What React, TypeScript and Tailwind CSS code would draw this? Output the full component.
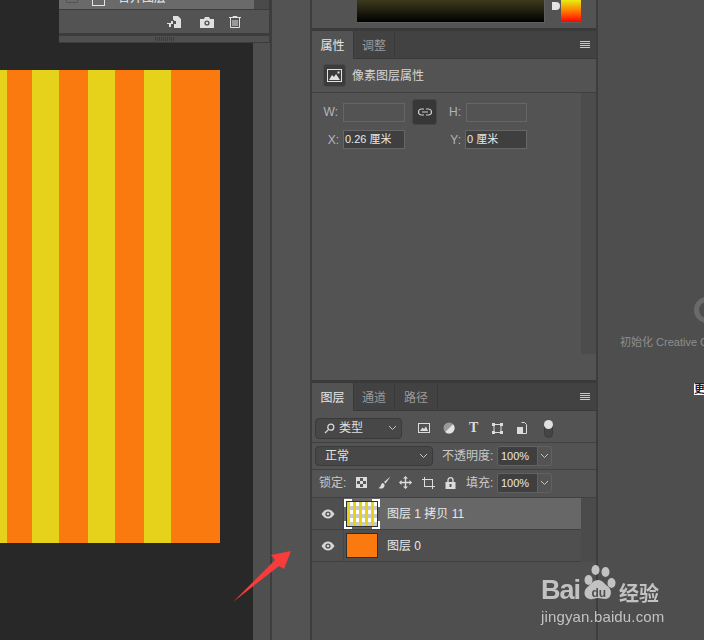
const font = { fontFamily: '"Liberation Sans", "Noto Sans CJK SC", sans-serif' }

const Chevron = () => (
  <svg width="9" height="6" viewBox="0 0 9 6" fill="none" stroke="#c4c4c4" strokeWidth="1">
    <path d="M1 1l3.5 3.5L8 1" />
  </svg>
)

const Menu = () => (
  <div className="flex flex-col gap-[1px] w-[10px]">
    <div className="h-[1px] bg-[#c8c8c8]" />
    <div className="h-[1px] bg-[#c8c8c8]" />
    <div className="h-[1px] bg-[#c8c8c8]" />
    <div className="h-[1px] bg-[#c8c8c8]" />
  </div>
)

const Eye = () => (
  <svg width="14" height="10" viewBox="0 0 14 10">
    <path d="M0.5 5C2.5 1.8 4.5 0.5 7 0.5S11.5 1.8 13.5 5C11.5 8.2 9.5 9.5 7 9.5S2.5 8.2 0.5 5z" fill="#d6d6d6" />
    <circle cx="7" cy="5" r="2.6" fill="#4f4f4f" />
    <circle cx="7" cy="5" r="1.3" fill="#d6d6d6" />
  </svg>
)

const Tabs = ({ items }: { items: { label: string; w: string }[] }) => (
  <div className="h-[28px] bg-[#424242] border-b border-[#393939] flex items-center shrink-0">
    {items.map((t, i) => (
      <div
        key={t.label}
        className={`${t.w} flex items-center justify-center pt-[2px] text-xs border-r border-[#393939] ${i === 0 ? 'bg-[#535353] text-[#e6e6e6] h-[28px] -mb-[1px]' : 'h-full text-[#9a9a9a]'}`}
      >
        {t.label}
      </div>
    ))}
    <div className="ml-auto mr-[6px]"><Menu /></div>
  </div>
)

const Stripes = () => (
  <div className="flex w-[220px] h-[473px] mt-[70px] shrink-0">
    <div className="w-[7px] bg-[#e6d21a]" />
    <div className="w-[25px] bg-[#fb7a10]" />
    <div className="w-[27px] bg-[#e6d21a]" />
    <div className="w-[29px] bg-[#fb7a10]" />
    <div className="w-[27px] bg-[#e6d21a]" />
    <div className="w-[29px] bg-[#fb7a10]" />
    <div className="w-[27px] bg-[#e6d21a]" />
    <div className="w-[49px] bg-[#fb7a10]" />
  </div>
)

const Thumb = () => (
  <div className="relative w-[36px] h-[30px] flex items-center justify-center">
    <div className="absolute left-0 top-0 w-[8px] h-[8px] border-l-2 border-t-2 border-white" />
    <div className="absolute right-0 top-0 w-[8px] h-[8px] border-r-2 border-t-2 border-white" />
    <div className="absolute left-0 bottom-0 w-[8px] h-[8px] border-l-2 border-b-2 border-white" />
    <div className="absolute right-0 bottom-0 w-[8px] h-[8px] border-r-2 border-b-2 border-white" />
    <div className="w-[32px] h-[26px] border border-[#2e2e2e] flex overflow-hidden">
      {[0, 1, 2, 3, 4].map(i => (
        <div key={i} className="flex">
          <div className="w-[3px] bg-[#e6d21a]" />
          <div className="w-[3px] bg-[repeating-linear-gradient(180deg,#ffffff_0,#ffffff_4px,#c9c9c9_4px,#c9c9c9_8px)]" />
        </div>
      ))}
    </div>
  </div>
)

const NumberBox = ({ value }: { value: string }) => (
  <div className="flex w-[55px] h-[20px] rounded-[3px] border border-[#616161] overflow-hidden">
    <div className="w-[39px] bg-[#3f3f3f] text-[#e8e8e8] text-[11px] leading-[18px] pl-[3px]">{value}</div>
    <div className="flex-1 border-l border-[#616161] flex items-center justify-center"><Chevron /></div>
  </div>
)

const PropsPanel = () => (
  <div className="bg-[#535353] flex flex-col shrink-0">
    <div className="h-[28px] flex shrink-0">
      <div className="ml-[45px] w-[188px] h-[23px] border-b border-r border-[#5f5f5f] bg-[linear-gradient(180deg,#3e3a1c_0%,#000000_100%)]" />
      <div className="ml-[7px] mt-[2px] w-[8px] h-[8px] rounded-r-full bg-[#e4e4e4]" />
      <div className="ml-[1px] w-[20px] h-[23px] border-b border-[#5f5f5f] bg-[linear-gradient(180deg,#e8ee10_0%,#ff7a00_50%,#ff0000_100%)]" />
    </div>
    <div className="h-[3px] bg-[#3a3a3a] shrink-0" />
    <Tabs items={[{ label: '属性', w: 'w-[42px]' }, { label: '调整', w: 'w-[41px]' }]} />
    <div className="h-[34px] flex items-center pl-[11px] gap-[6px] border-b border-[#3f3f3f] shrink-0">
      <div className="w-[23px] h-[23px] rounded-[3px] bg-[#3c3c3c] border border-[#4a4a4a] flex items-center justify-center">
        <svg width="15" height="13" viewBox="0 0 15 13">
          <rect x="0.5" y="0.5" width="14" height="12" fill="none" stroke="#e2e2e2" />
          <path d="M2 11l3-5 2 2 2-3 4 6z" fill="#e2e2e2" />
          <rect x="10.5" y="2.5" width="2" height="2" fill="#e2e2e2" />
        </svg>
      </div>
      <span className="text-xs text-[#d6d6d6]">像素图层属性</span>
    </div>
    <div className="h-[261px] flex shrink-0">
      <div className="w-[269px] pt-[6px]">
        <div className="flex items-center h-[26px]">
          <span className="w-[31px] text-right pr-[5px] text-xs text-[#aeb6c2]">W:</span>
          <div className="w-[62px] h-[19px] border border-[#666666]" />
          <div className="ml-[7px] w-[25px] h-[26px] rounded-[3px] bg-[#373737] border border-[#464646] flex items-center justify-center">
            <svg width="14" height="8" viewBox="0 0 14 8" fill="none" stroke="#cfcfcf" strokeWidth="1.2">
              <path d="M6 1H3.5a3 3 0 000 6H6M8 1h2.5a3 3 0 010 6H8M4 4h6" />
            </svg>
          </div>
          <span className="w-[29px] text-right pr-[5px] text-xs text-[#aeb6c2]">H:</span>
          <div className="w-[61px] h-[19px] border border-[#666666]" />
        </div>
        <div className="flex items-center h-[19px] mt-[5px]">
          <span className="w-[31px] text-right pr-[4px] text-xs text-[#aeb6c2]">X:</span>
          <div className="w-[62px] h-[19px] border border-[#666666] bg-[#3f3f3f] text-[#e8e8e8] text-[11px] leading-[17px] pl-[1px]">0.26 厘米</div>
          <span className="w-[60px] text-right pr-[4px] text-xs text-[#aeb6c2]">Y:</span>
          <div className="w-[62px] h-[19px] border border-[#666666] bg-[#3f3f3f] text-[#e8e8e8] text-[11px] leading-[17px] pl-[1px]">0 厘米</div>
        </div>
      </div>
      <div className="flex-1 bg-[#4c4c4c]" />
    </div>
    <div className="h-[26px] shrink-0" />
    <div className="h-[3px] bg-[#3a3a3a] shrink-0" />
  </div>
)

const LayersPanel = () => (
  <>
    <Tabs items={[{ label: '图层', w: 'w-[42px]' }, { label: '通道', w: 'w-[41px]' }, { label: '路径', w: 'w-[43px]' }]} />
    <div className="h-[32px] bg-[#535353] flex items-center pl-[3px] pt-[3px] border-b border-[#404040] shrink-0">
      <div className="w-[87px] h-[21px] rounded-[4px] bg-[#474747] border border-[#3a3a3a] flex items-center pl-[8px] pr-[4px] text-xs text-[#e0e0e0]">
        <svg width="11" height="11" viewBox="0 0 11 11" fill="none" stroke="#d8d8d8" strokeWidth="1.3">
          <circle cx="6.8" cy="4.2" r="3" />
          <path d="M4.6 6.4L1 10" />
        </svg>
        <span className="ml-[4px]">类型</span>
        <div className="ml-auto"><Chevron /></div>
      </div>
      <svg className="ml-[16px]" width="12" height="10" viewBox="0 0 12 10">
        <rect x="0.5" y="0.5" width="11" height="9" fill="none" stroke="#dcdcdc" />
        <path d="M2 8l2.5-3.5 1.5 1.5L8 3.5 10 8z" fill="#dcdcdc" />
      </svg>
      <svg className="ml-[13px]" width="12" height="12" viewBox="0 0 12 12">
        <circle cx="6" cy="6" r="5.5" fill="#9a9a9a" />
        <path d="M10 2.2A5.5 5.5 0 012.2 10z" fill="#e2e2e2" />
      </svg>
      <span className="ml-[14px] w-[12px] text-[14px] font-bold leading-none text-[#dcdcdc] font-['Liberation_Serif',serif]">T</span>
      <svg className="ml-[11px]" width="11" height="11" viewBox="0 0 11 11" fill="#dcdcdc">
        <path d="M2 1.5h7v8H2z" fill="none" stroke="#dcdcdc" />
        <rect x="0" y="0" width="3" height="3" />
        <rect x="8" y="0" width="3" height="3" />
        <rect x="0" y="8" width="3" height="3" />
        <rect x="8" y="8" width="3" height="3" />
      </svg>
      <svg className="ml-[14px]" width="10" height="12" viewBox="0 0 10 12">
        <path d="M4.5 0.5h3l2 2v9H5" fill="none" stroke="#dcdcdc" />
        <rect x="0" y="5" width="6" height="7" fill="#dcdcdc" />
      </svg>
      <div className="ml-[17px] mt-[2px] w-[9px] h-[18px] rounded-full border border-[#3b3b3b] bg-[#454545] relative">
        <div className="absolute -left-[1px] -top-[1px] w-[9px] h-[9px] rounded-full bg-[#e0e0e0]" />
      </div>
    </div>
    <div className="h-[27px] bg-[#535353] flex items-center pl-[3px] border-b border-[#404040] shrink-0">
      <div className="w-[118px] h-[20px] rounded-[4px] bg-[#474747] border border-[#3a3a3a] flex items-center pl-[9px] pr-[4px] text-xs text-[#e0e0e0]">
        <span>正常</span>
        <div className="ml-auto"><Chevron /></div>
      </div>
      <span className="ml-[9px] w-[55px] text-xs text-[#c8c8c8] whitespace-nowrap">不透明度:</span>
      <NumberBox value="100%" />
    </div>
    <div className="h-[28px] bg-[#535353] flex items-center pb-[2px] border-b border-[#404040] shrink-0">
      <span className="ml-[7px] w-[27px] text-xs text-[#c8c8c8] whitespace-nowrap">锁定:</span>
      <svg className="ml-[10px]" width="11" height="11" viewBox="0 0 11 11">
        <rect x="0.5" y="0.5" width="10" height="10" fill="#555555" stroke="#dcdcdc" />
        <path d="M1 1h3v3H1zM7 1h3v3H7zM4 4h3v3H4zM1 7h3v3H1zM7 7h3v3H7z" fill="#dcdcdc" />
      </svg>
      <svg className="ml-[11px]" width="13" height="13" viewBox="0 0 13 13">
        <path d="M12.5 0.5L6 6l1.5 1.5zM5 7C2.5 7 3.5 11 0.5 12c3 1.5 6.5 0 6-3.5z" fill="#dcdcdc" />
      </svg>
      <svg className="ml-[8px]" width="13" height="13" viewBox="0 0 13 13" fill="#dcdcdc">
        <path d="M6.5 0L9 2.5H7.2v3.3h3.3V4L13 6.5 10.5 9V7.2H7.2v3.3H9L6.5 13 4 10.5h1.8V7.2H2.5V9L0 6.5 2.5 4v1.8h3.3V2.5H4z" />
      </svg>
      <svg className="ml-[10px]" width="13" height="12" viewBox="0 0 13 12" fill="none" stroke="#dcdcdc">
        <path d="M0 2.5h11M2.5 0v10M2.5 9.5H13M10.5 2.5V12" />
      </svg>
      <svg className="ml-[10px]" width="11" height="12" viewBox="0 0 10 12">
        <path d="M2.5 5V3.2a2.5 2.5 0 015 0V5" fill="none" stroke="#dcdcdc" strokeWidth="1.3" />
        <rect x="0" y="5" width="10" height="7" fill="#dcdcdc" />
        <rect x="4" y="7" width="2" height="3" fill="#555555" />
      </svg>
      <span className="ml-[10px] w-[31px] text-xs text-[#c8c8c8] whitespace-nowrap">填充:</span>
      <NumberBox value="100%" />
    </div>
    <div className="flex shrink-0">
      <div className="w-[269px]">
        <div className="flex h-[32px] border-b border-[#404040]">
          <div className="w-[32px] flex items-center justify-center border-r border-[#454545]"><Eye /></div>
          <div className="flex-1 bg-[#676767] flex items-center">
            <Thumb />
            <span className="ml-[7px] text-xs text-[#e8e8e8] whitespace-nowrap">图层 1 拷贝 11</span>
          </div>
        </div>
        <div className="flex h-[32px] border-b border-[#404040]">
          <div className="w-[32px] flex items-center justify-center border-r border-[#454545]"><Eye /></div>
          <div className="flex items-center pl-[2px]">
            <div className="w-[32px] h-[25px] border border-[#2e2e2e] bg-[#fb7a10]" />
            <span className="ml-[9px] text-xs text-[#e8e8e8] whitespace-nowrap">图层 0</span>
          </div>
        </div>
      </div>
      <div className="flex-1 bg-[#4b4b4b]" />
    </div>
  </>
)

const Watermark = () => (
  <div className="absolute left-[541px] top-[565px] w-[126px] text-[#c2c2c2] blur-[0.4px]">
    <div className="flex items-end h-[39px] leading-none">
      <span className="text-[27px] font-bold tracking-[-1px]">Bai</span>
      <svg className="ml-[2px] mb-[-1px] shrink-0" width="35" height="40" viewBox="0 0 32 40" fill="#c2c2c2">
        <ellipse cx="5" cy="15" rx="4" ry="5" />
        <ellipse cx="12" cy="5" rx="4" ry="5" />
        <ellipse cx="22" cy="7" rx="4" ry="5" />
        <ellipse cx="28" cy="18" rx="4" ry="5" />
        <path d="M15 15c4 0 6 4 10 7 4 3 3 12-3 12-3 0-5-1-8-1s-5 2-8 1c-6-1-6-8-3-11 4-3 6-8 12-8z" />
        <text x="8" y="32" fontSize="12" fontWeight="700" fill="#4f4f4f">du</text>
      </svg>
      <span className="text-[20px] font-bold ml-[2px] whitespace-nowrap">经验</span>
    </div>
    <div className="mt-[5px] text-[15px] leading-[16px] tracking-[0.15px] whitespace-nowrap">jingyan.baidu.com</div>
  </div>
)

const Arrow = () => (
  <svg className="absolute left-[230px] top-[548px]" width="62" height="58" viewBox="0 0 62 58">
    <path d="M3 54L45 12L41 7L61 3L54 21L49 18Z" fill="#f83c3c" />
  </svg>
)

export default function App() {
  return (
    <div className="relative w-[704px] h-[640px] overflow-hidden flex bg-[#4e4e4e]" style={font}>
      <div className="w-[253px] h-full bg-[#282828] shrink-0">
        <Stripes />
      </div>
      <div className="w-[17px] bg-[#4f4f4f] shrink-0" />
      <div className="w-[2px] bg-[#3d3d3d] shrink-0" />
      <div className="w-[38px] bg-[#535353] shrink-0" />
      <div className="w-[2px] bg-[#3d3d3d] shrink-0" />
      <div className="w-[284px] bg-[#4f4f4f] flex flex-col shrink-0">
        <PropsPanel />
        <LayersPanel />
      </div>
      <div className="w-[2px] bg-[#3d3d3d] shrink-0" />
      <div className="flex-1 pl-[22px] pt-[297px] overflow-hidden">
        <div className="ml-[74px] w-[26px] h-[26px] rounded-full border-[5px] border-[#6a6a6a]" />
        <div className="mt-[12px] text-[11px] leading-[14px] text-[#8f8f8f] whitespace-nowrap">初始化 Creative C</div>
        <div className="ml-[74px] mt-[34px] w-[10px] bg-white text-[#1a1a3a] text-[11px] leading-[12px] font-bold">更</div>
      </div>

      <div className="absolute left-[59px] top-0 w-[212px] h-[43px] bg-[#3c3c3c] flex flex-col">
        <div className="h-[9px] flex shrink-0 overflow-hidden">
          <div className="w-[195px] bg-[#6a6a6a] flex items-start">
            <div className="w-[12px] h-[3px] ml-[7px] border border-t-0 border-[#555555]" />
            <div className="w-[13px] h-[6px] ml-[14px] border border-t-0 border-[#e4e4e4]" />
            <span className="ml-[13px] text-xs leading-[12px] text-[#eeeeee] whitespace-nowrap -translate-y-[8px]">合并图层</span>
          </div>
          <div className="w-[15px] bg-[#4a4a4a]" />
        </div>
        <div className="h-[23px] mt-[1px] bg-[#535353] flex items-center justify-end gap-[15px] pr-[28px] shrink-0 w-[210px] pt-[1px]">
          <svg width="15" height="12" viewBox="0 0 15 12" fill="#e0e0e0">
            <path d="M6 0h5l3 3v9H7V8h2V5H7V4H6zM2 7h2V5h2v2h0v1H4v3H2V8H0V7z" />
          </svg>
          <svg className="ml-[3px]" width="14" height="11" viewBox="0 0 14 11">
            <path d="M0 2h4l1-2h4l1 2h4v9H0z" fill="#e0e0e0" />
            <circle cx="7" cy="6" r="2.6" fill="#535353" />
            <circle cx="7" cy="6" r="1.2" fill="#e0e0e0" />
          </svg>
          <svg width="12" height="12" viewBox="0 0 12 12" fill="none" stroke="#e0e0e0">
            <path d="M0 1.5h12M4 1.5V.5h4v1M1.5 2v9.5h9V2M4 4v6M6 4v6M8 4v6" />
          </svg>
        </div>
        <div className="h-[3px] shrink-0" />
        <div className="h-[6px] w-[210px] bg-[#505050] flex justify-center gap-[1px] pt-[1px] pl-[1px]">
          {Array.from({ length: 10 }).map((_, i) => (
            <div key={i} className="w-[1px] h-[4px] bg-[#3c3c3c]" />
          ))}
        </div>
      </div>

      <Arrow />
      <Watermark />
    </div>
  )
}
